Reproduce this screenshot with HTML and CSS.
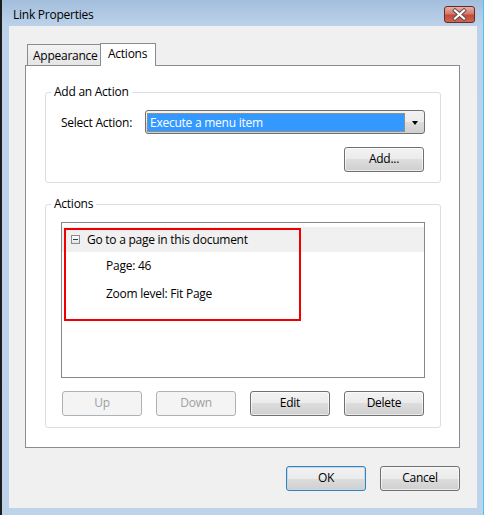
FILE: index.html
```html
<!DOCTYPE html>
<html>
<head>
<meta charset="utf-8">
<link rel="stylesheet" href="styles.css">
</head>
<body>
<div class="window">
  <div class="titlebar">
    <span class="title">Link Properties</span>
    <div class="close">
      <svg width="31" height="17" viewBox="0 0 31 17">
        <defs>
          <linearGradient id="cg" x1="0" y1="0" x2="0" y2="1">
            <stop offset="0" stop-color="#e9b3aa"/>
            <stop offset="0.45" stop-color="#d47a6c"/>
            <stop offset="0.55" stop-color="#c24a38"/>
            <stop offset="1" stop-color="#d06a52"/>
          </linearGradient>
        </defs>
        <rect x="0.5" y="0.5" width="30" height="16" rx="2.5" fill="url(#cg)" stroke="#6a2a2a"/>
        <path d="M11 4.5 L20 12.5 M20 4.5 L11 12.5" stroke="#5a4a50" stroke-width="4" stroke-linecap="square"/>
        <path d="M11 4.5 L20 12.5 M20 4.5 L11 12.5" stroke="#ffffff" stroke-width="2.2" stroke-linecap="square"/>
      </svg>
    </div>
  </div>
  <div class="client">
    <div class="tabs">
      <div class="tab">Appearance</div>
      <div class="tab active">Actions</div>
    </div>
    <div class="panel">
      <fieldset class="group add-group">
        <legend>Add an Action</legend>
        <div class="select-row">
          <span class="field-label">Select Action:</span>
          <div class="combo">
            <span class="combo-value">Execute a menu item</span>
            <span class="combo-arrow"></span>
          </div>
        </div>
        <div class="add-row">
          <div class="btn">Add...</div>
        </div>
      </fieldset>
      <fieldset class="group actions-group">
        <legend>Actions</legend>
        <div class="list">
          <div class="tree-row header"><span class="toggle"></span>Go to a page in this document</div>
          <div class="tree-row child">Page: 46</div>
          <div class="tree-row child">Zoom level: Fit Page</div>
          <div class="highlight"></div>
        </div>
        <div class="btn-row">
          <div class="btn disabled">Up</div>
          <div class="btn disabled">Down</div>
          <div class="btn">Edit</div>
          <div class="btn">Delete</div>
        </div>
      </fieldset>
    </div>
    <div class="footer">
      <div class="btn default">OK</div>
      <div class="btn">Cancel</div>
    </div>
  </div>
</div>
</body>
</html>
```

FILE: styles.css
```css
html, body {
  margin: 0;
  padding: 0;
}
body {
  width: 484px;
  height: 515px;
  overflow: hidden;
  font-family: "Segoe UI", "Open Sans", sans-serif;
  font-size: 12px;
  letter-spacing: -0.25px;
  color: #000;
  background: #bdd3ea;
}
.window {
  height: 515px;
  box-sizing: border-box;
  border-left: 2px solid #1d1d1d;
  border-right: 1px solid #4fc3ef;
  background: linear-gradient(to bottom, #a3bedb 0, #bcd2ea 26px, #bdd3ea 100%);
  display: flex;
  flex-direction: column;
}
.titlebar {
  height: 26px;
  flex: none;
  display: flex;
  align-items: flex-start;
  padding-left: 11px;
}
.title {
  margin-top: 6px;
  line-height: 17px;
  color: #000;
}
.close {
  margin-left: auto;
  margin-right: 8px;
  margin-top: 6px;
  height: 17px;
}
.close svg {
  display: block;
}
.client {
  flex: 1;
  margin: 0 6px 7px 7px;
  background: #f0f0f0;
  padding: 17px 17px 0 16px;
  display: flex;
  flex-direction: column;
}
.tabs {
  display: flex;
  align-items: flex-end;
  height: 22px;
  padding-left: 2px;
}
.tab {
  box-sizing: border-box;
  height: 21px;
  width: 74px;
  border: 1px solid #898c95;
  border-bottom: none;
  background: linear-gradient(to bottom, #f3f3f3, #e5e5e5);
  padding-left: 5px;
  line-height: 21px;
}
.tab.active {
  position: relative;
  z-index: 1;
  height: 23px;
  width: 56px;
  margin-left: -1px;
  margin-bottom: -1px;
  background: #fff;
  padding-left: 7px;
  line-height: 19px;
}
.panel {
  box-sizing: border-box;
  height: 383px;
  border: 1px solid #898c95;
  background: #fff;
  padding: 18px 18px 0 19px;
}
.group {
  margin: 0;
  padding: 10px 15px 10px 15px;
  border: 1px solid #d5dfe5;
  border-radius: 3px;
  min-width: 0;
}
.group legend {
  padding: 0 3px;
  margin-left: -10px;
  line-height: 16px;
}
.actions-group {
  margin-top: 13px;
  padding-top: 10px;
  padding-bottom: 11px;
}
.select-row {
  display: flex;
  align-items: center;
}
.field-label {
  width: 84px;
  flex: none;
}
.combo {
  flex: 1;
  box-sizing: border-box;
  height: 24px;
  border: 1px solid #707070;
  border-radius: 3px;
  background: linear-gradient(to bottom, #f2f2f2 0, #ebebeb 50%, #dddddd 50%, #cfcfcf 100%);
  display: flex;
  align-items: stretch;
  padding: 2px 0 1px 1px;
}
.combo-value {
  flex: 1;
  background: #3399ff;
  color: #fff;
  outline: 1px dotted #e08a2c;
  outline-offset: -1px;
  padding-left: 3px;
  line-height: 19px;
}
.combo-arrow {
  width: 19px;
  flex: none;
  position: relative;
}
.combo-arrow::after {
  content: "";
  position: absolute;
  left: 7px;
  top: 8px;
  border-left: 3.5px solid transparent;
  border-right: 3.5px solid transparent;
  border-top: 4px solid #000;
}
.add-row {
  display: flex;
  justify-content: flex-end;
  margin-top: 13px;
  padding-right: 1px;
}
.btn {
  box-sizing: border-box;
  width: 80px;
  height: 25px;
  border: 1px solid #707070;
  border-radius: 3px;
  background: linear-gradient(to bottom, #f2f2f2 0, #ebebeb 50%, #dddddd 50%, #cfcfcf 100%);
  box-shadow: inset 0 0 0 1px rgba(255,255,255,0.6);
  text-align: center;
  line-height: 22px;
  color: #000;
}
.btn.disabled {
  border-color: #adb2b5;
  background: #f4f4f4;
  box-shadow: none;
  color: #a0a0a0;
}
.btn.default {
  border-color: #3c7fb1;
  box-shadow: inset 0 0 0 1px #b8dcf2;
}
.list {
  position: relative;
  box-sizing: border-box;
  height: 156px;
  border: 1px solid #828790;
  padding-top: 4px;
}
.tree-row {
  white-space: nowrap;
}
.tree-row.header {
  height: 25px;
  background: #f0f0f0;
  display: flex;
  align-items: center;
  padding-left: 9px;
  line-height: 20px;
}
.toggle {
  box-sizing: border-box;
  width: 9px;
  height: 9px;
  border: 1px solid #8c8c8c;
  background: linear-gradient(to bottom, #ffffff, #e4e4e4);
  margin-right: 7px;
  position: relative;
}
.toggle::after {
  content: "";
  position: absolute;
  left: 1px;
  top: 3px;
  width: 5px;
  height: 1px;
  background: #2a3a5a;
}
.tree-row.child {
  padding-left: 44px;
  line-height: 28px;
}
.highlight {
  position: absolute;
  left: 2px;
  top: 5px;
  width: 237px;
  height: 93px;
  box-sizing: border-box;
  border: 2px solid #f00000;
}
.btn-row {
  display: flex;
  gap: 14px;
  margin-top: 13px;
  padding-left: 1px;
}
.footer {
  display: flex;
  justify-content: flex-end;
  gap: 14px;
  margin-top: 18px;
}
```
